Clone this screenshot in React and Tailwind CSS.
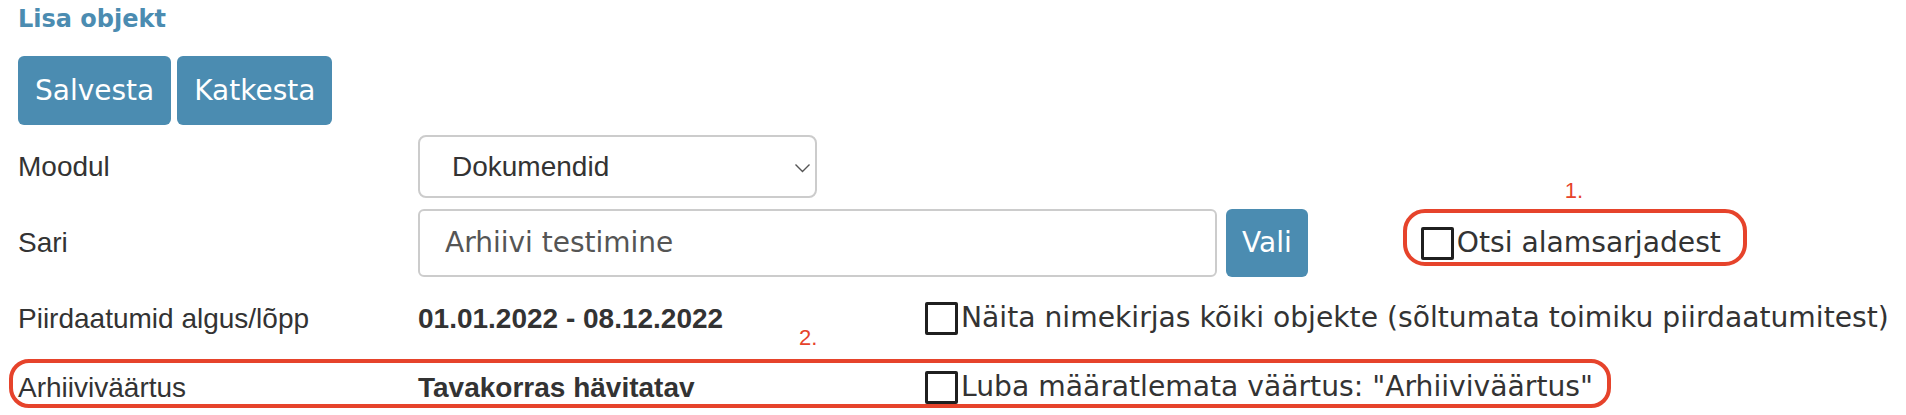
export default function App() {
  const verdana = "font-['DejaVu_Sans',Verdana,sans-serif]";
  const helv = "font-['Liberation_Sans',Arial,sans-serif]";

  return (
    <div className="w-[1906px] h-[415px] bg-white text-[#333] overflow-hidden">
      <div className="pl-[18px] pt-[5px]">
        {/* Title */}
        <h1 className={`${verdana} text-[24px] leading-[28px] h-[28px] font-bold text-[#4b8cb1]`}>
          Lisa objekt
        </h1>

        {/* Buttons */}
        <div className="flex gap-[6px] mt-[23px]">
          <button className={`${verdana} h-[69px] px-[17px] rounded-[6px] bg-[#4b8cb1] text-white text-[28px]`}>
            Salvesta
          </button>
          <button className={`${verdana} h-[69px] px-[17px] rounded-[6px] bg-[#4b8cb1] text-white text-[28px]`}>
            Katkesta
          </button>
        </div>

        {/* Moodul */}
        <div className="flex items-center h-[63px] mt-[10px]">
          <div className={`${helv} w-[400px] text-[28px]`}>Moodul</div>
          <div className="w-[399px] h-[63px] border-2 border-[#ccc] rounded-[8px] pl-[32px] pr-[4px] flex items-center justify-between">
            <span className={`${helv} text-[28px] text-[#333]`}>Dokumendid</span>
            <svg width="17" height="10" viewBox="0 0 17 10" className="mt-[3px]">
              <path d="M1.5 1.5 L8.5 8.5 L15.5 1.5" fill="none" stroke="#555" strokeWidth="1.4" />
            </svg>
          </div>
        </div>

        {/* Sari */}
        <div className="flex items-start h-[68px] mt-[11px]">
          <div className={`${helv} w-[400px] h-[68px] flex items-center text-[28px]`}>Sari</div>
          <div className="w-[799px] h-[68px] border-2 border-[#ccc] rounded-[6px] pl-[25px] flex items-center">
            <span className={`${verdana} text-[28px] text-[#555]`}>Arhiivi testimine</span>
          </div>
          <button className={`${verdana} ml-[9px] h-[68px] px-[16px] rounded-[6px] bg-[#4b8cb1] text-white text-[28px]`}>
            Vali
          </button>
          <div className="relative ml-[95px] h-[57px] border-[4px] border-[#e6432b] rounded-[22px] pl-[14px] pr-[22px] pt-[9px]">
            <span className={`${helv} absolute left-[158px] top-[-33px] text-[22px] leading-none text-[#e6432b]`}>
              1.
            </span>
            <label className="flex items-center">
              <span className="w-[33px] h-[33px] border-[3px] border-[#1f1f1f] rounded-[2px] bg-white" />
              <span className={`${verdana} ml-[3px] text-[28.2px]`}>Otsi alamsarjadest</span>
            </label>
          </div>
        </div>

        {/* Piirdaatumid */}
        <div className="flex items-center h-[33px] mt-[25px]">
          <div className={`${helv} w-[400px] text-[28px]`}>Piirdaatumid algus/lõpp</div>
          <div className={`${helv} w-[507px] text-[28px] font-bold`}>01.01.2022 - 08.12.2022</div>
          <span className="w-[33px] h-[33px] border-[3px] border-[#1f1f1f] rounded-[2px] bg-white" />
          <span className={`${verdana} ml-[3px] text-[28.2px] whitespace-nowrap`}>
            Näita nimekirjas kõiki objekte (sõltumata toimiku piirdaatumitest)
          </span>
        </div>

        {/* Arhiiviväärtus */}
        <div className="relative -ml-[9px] mt-[24px] w-fit h-[49px] border-[4px] border-[#e6432b] rounded-[20px] pl-[5px] pr-[14px] pt-[8px]">
          <span className={`${helv} absolute left-[786px] top-[-36px] text-[22px] leading-none text-[#e6432b]`}>
            2.
          </span>
          <div className="flex items-center h-[33px]">
            <div className={`${helv} w-[400px] text-[28px]`}>Arhiiviväärtus</div>
            <div className={`${helv} w-[507px] text-[28px] font-bold`}>Tavakorras hävitatav</div>
            <span className="w-[33px] h-[33px] border-[3px] border-[#1f1f1f] rounded-[2px] bg-white" />
            <span className={`${verdana} ml-[3px] text-[28.2px] whitespace-nowrap`}>
              Luba määratlemata väärtus: "Arhiiviväärtus"
            </span>
          </div>
        </div>
      </div>
    </div>
  );
}
